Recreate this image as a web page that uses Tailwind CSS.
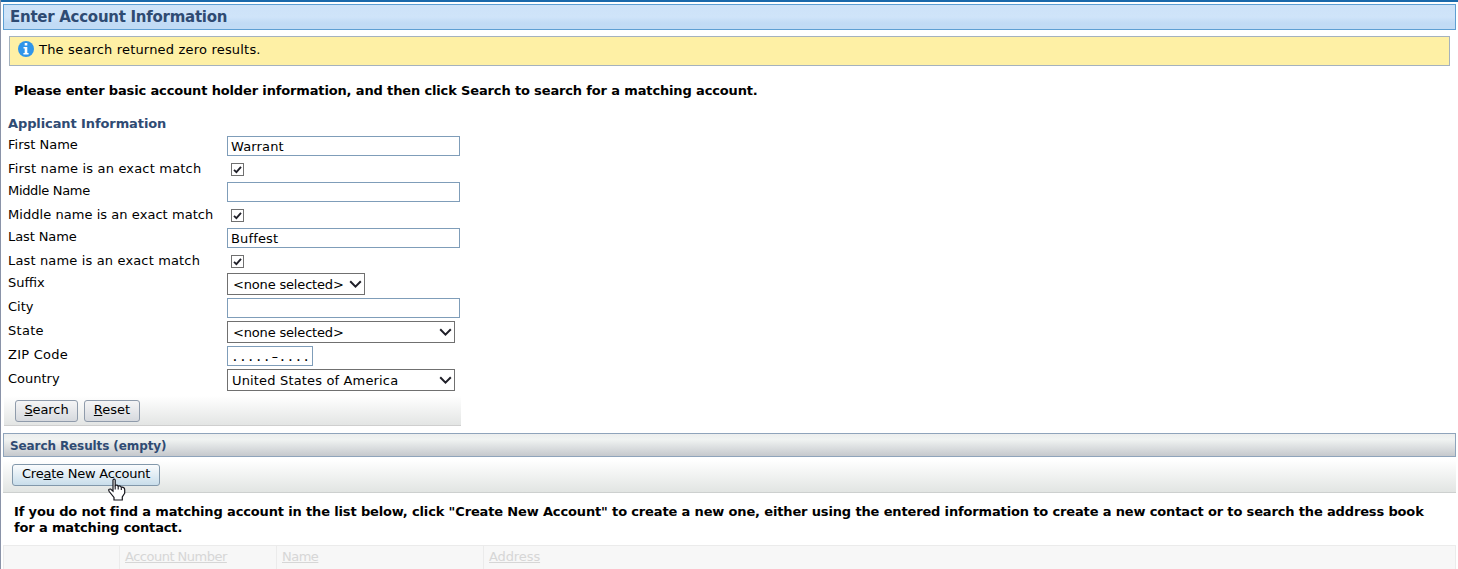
<!DOCTYPE html>
<html lang="en">
<head>
<meta charset="utf-8">
<title>Enter Account Information</title>
<script src="https://cdn.jsdelivr.net/npm/@tailwindcss/browser@4"></script>
</head>
<body class="bg-white">
<svg class="hidden">
  <symbol id="check" viewBox="0 0 13 13"><path d="M3 6.8 L5.4 9.2 L10 3.8" fill="none" stroke="#1f1f28" stroke-width="1.8"/></symbol>
  <symbol id="chev" viewBox="0 0 13 9"><path d="M1.2 1.3 L6.5 6.6 L11.8 1.3" fill="none" stroke="#1f1f28" stroke-width="2"/></symbol>
</svg>
<div class="h-[569px] w-[1458px] overflow-hidden border-l border-[#8a93a8] font-['DejaVu_Sans',sans-serif] text-[13px] text-black">
  <div class="-ml-px h-[2px] bg-[#1b69aa]"></div>
  <div class="pt-[2px] pl-[2px] pr-[2px]">
    <div class="flex h-[26px] items-center border border-[#5e9fd3] bg-linear-to-b from-[#cde2f8] via-[#cfe4f9] via-50% to-[#c1dbf5] to-75% pl-[6px] text-[15px] font-bold text-[#2f4b73]"><span class="whitespace-nowrap tracking-[-0.27px]">Enter Account Information</span></div>
  </div>
  <div class="mt-[6px] ml-[8px] mr-[8px] flex h-[30px] border border-[#a5b2bd] bg-[#fef0a5] pl-[8px] pt-[4px]">
    <svg class="size-4 shrink-0" viewBox="0 0 16 16"><circle cx="8" cy="8" r="8" fill="#2f95ea"/><path d="M6.7 2h2.6v2.4H6.7zM5.5 6h3.8v6h1.3v1.4H5.4V12h1.3V7.4H5.5z" fill="#fff"/></svg>
    <span class="ml-[5px] whitespace-nowrap leading-[17px] tracking-[0.19px]">The search returned zero results.</span>
  </div>
  <p class="mt-[16px] ml-[13px] h-[18px] whitespace-nowrap font-bold leading-[18px] tracking-[-0.145px]">Please enter basic account holder information, and then click Search to search for a matching account.</p>
  <h2 class="mt-[15px] ml-[7px] h-[18px] whitespace-nowrap font-bold leading-[18px] tracking-[-0.1px] text-[#2f4b73]">Applicant Information</h2>
  <div class="mt-px ml-[7px] grid grid-cols-[219px_auto] grid-rows-[24px_22px_24px_22px_24px_22px_24px_24px_24px_24px_24px] whitespace-nowrap leading-[22px]">
    <div>First Name</div><div class="mt-[2px] h-[20px] w-[233px] border border-[#7f9db9] pl-[3px] leading-[20px] tracking-[0.15px]">Warrant</div>
    <div class="tracking-[0.18px]">First name is an exact match</div><div class="mt-[5px] ml-[4px] size-[13px] border border-[#707070]"><svg class="-m-px size-[13px]"><use href="#check"/></svg></div>
    <div class="tracking-[-0.33px]">Middle Name</div><div class="mt-[2px] h-[20px] w-[233px] border border-[#7f9db9]"></div>
    <div class="tracking-[0.05px]">Middle name is an exact match</div><div class="mt-[5px] ml-[4px] size-[13px] border border-[#707070]"><svg class="-m-px size-[13px]"><use href="#check"/></svg></div>
    <div class="tracking-[-0.1px]">Last Name</div><div class="mt-[2px] h-[20px] w-[233px] border border-[#7f9db9] pl-[3px] leading-[20px] tracking-[0.15px]">Buffest</div>
    <div class="tracking-[0.15px]">Last name is an exact match</div><div class="mt-[5px] ml-[4px] size-[13px] border border-[#707070]"><svg class="-m-px size-[13px]"><use href="#check"/></svg></div>
    <div>Suffix</div><div class="mt-px flex h-[22px] w-[138px] justify-between border border-[#707070] pl-[5px] pr-[2px]"><span class="tracking-[-0.17px]">&lt;none selected&gt;</span><svg class="mt-[6px] h-[9px] w-[13px]"><use href="#chev"/></svg></div>
    <div>City</div><div class="mt-[2px] h-[20px] w-[233px] border border-[#7f9db9]"></div>
    <div class="tracking-[0.3px]">State</div><div class="mt-px flex h-[22px] w-[228px] justify-between border border-[#707070] pl-[5px] pr-[2px]"><span class="tracking-[-0.17px]">&lt;none selected&gt;</span><svg class="mt-[6px] h-[9px] w-[13px]"><use href="#chev"/></svg></div>
    <div class="tracking-[0.25px]">ZIP Code</div><div class="mt-[2px] h-[20px] w-[86px] border border-[#7f9db9] pl-[3px] font-['DejaVu_Sans_Mono',monospace] leading-[20px] tracking-[0.1px]">.....<span class="inline-block scale-x-150">-</span>....</div>
    <div>Country</div><div class="mt-px flex h-[22px] w-[228px] justify-between border border-[#707070] pl-[4px] pr-[2px]"><span class="tracking-[0.16px]">United States of America</span><svg class="mt-[6px] h-[9px] w-[13px]"><use href="#chev"/></svg></div>
  </div>
  <div class="mt-[4px] ml-[3px] flex h-[30px] w-[457px] gap-[6px] border-b border-[#cfcfcf] bg-linear-to-b from-white to-[#e3e5e4] pt-[4px] pl-[11px]">
    <div class="h-[22px] w-[63px] rounded-[3px] border border-[#8f9bab] bg-linear-to-b from-[#f5f5f6] to-[#d6d9de] text-center leading-[18px] tracking-[-0.1px]"><u>S</u>earch</div>
    <div class="h-[22px] w-[56px] rounded-[3px] border border-[#8f9bab] bg-linear-to-b from-[#f5f5f6] to-[#d6d9de] text-center leading-[18px]"><u>R</u>eset</div>
  </div>
  <div class="mt-[7px] ml-[2px] mr-[2px] h-[24px] border border-[#8fa4bb] bg-linear-to-b from-[#eceeee] via-[#f0f3f2] via-25% to-[#c6c9cd] pl-[6px] text-[12px] leading-[24px] font-bold text-[#2f4b73]"><span class="whitespace-nowrap tracking-[-0.1px]">Search Results (empty)</span></div>
  <div class="mt-[3px] ml-[2px] mr-[2px] h-[33px] border-b border-[#cdd0cf] bg-linear-to-b from-white to-[#e2e5e3] pt-[4px] pl-[9px]">
    <div class="relative h-[22px] w-[148px] whitespace-nowrap rounded-[3px] border border-[#8298ab] bg-linear-to-b from-[#fafcfd] to-[#c9deeb] pl-[9px] leading-[18px] tracking-[-0.23px]">Cre<u>a</u>te New Account
      <svg class="absolute top-[13px] left-[95px] h-[23px] w-[18px]" viewBox="0 0 18 23"><path d="M5 2Q6.1 0 7.2 2V7.5Q9.2 6.4 10.2 8.3Q12.2 7.3 13.3 9.2Q16.7 8.8 16.7 11.8V15.2L14.3 19V22H6V19.5L1.2 13.5Q-.2 10.8 2.6 11L5 13.2Z" fill="#fff" stroke="#15151c" stroke-width="1.2"/><path d="M7.2 7.5V11.5M10.2 8.3V11.5M13.3 9.2V12" stroke="#15151c" stroke-width="1.1"/></svg>
    </div>
  </div>
  <p class="mt-[11px] ml-[13px] whitespace-nowrap font-bold leading-[16px] tracking-[-0.147px]">If you do not find a matching account in the list below, click "Create New Account" to create a new one, either using the entered information to create a new contact or to search the address book<br>for a matching contact.</p>
  <div class="mt-[9px] ml-[2px] mr-[2px] grid h-[25px] grid-cols-[116px_157px_207px_1fr] border border-[#ebebeb] bg-[#f7f7f7] leading-[22px] text-[#d6d6d6]">
    <div class="border-r border-[#ebebeb]"></div>
    <div class="border-r border-[#ebebeb] pl-[5px]"><u class="tracking-[-0.5px]">Account Number</u></div>
    <div class="border-r border-[#ebebeb] pl-[5px]"><u class="tracking-[-0.5px]">Name</u></div>
    <div class="pl-[5px]"><u class="tracking-[-0.1px]">Address</u></div>
  </div>
</div>
</body>
</html>
